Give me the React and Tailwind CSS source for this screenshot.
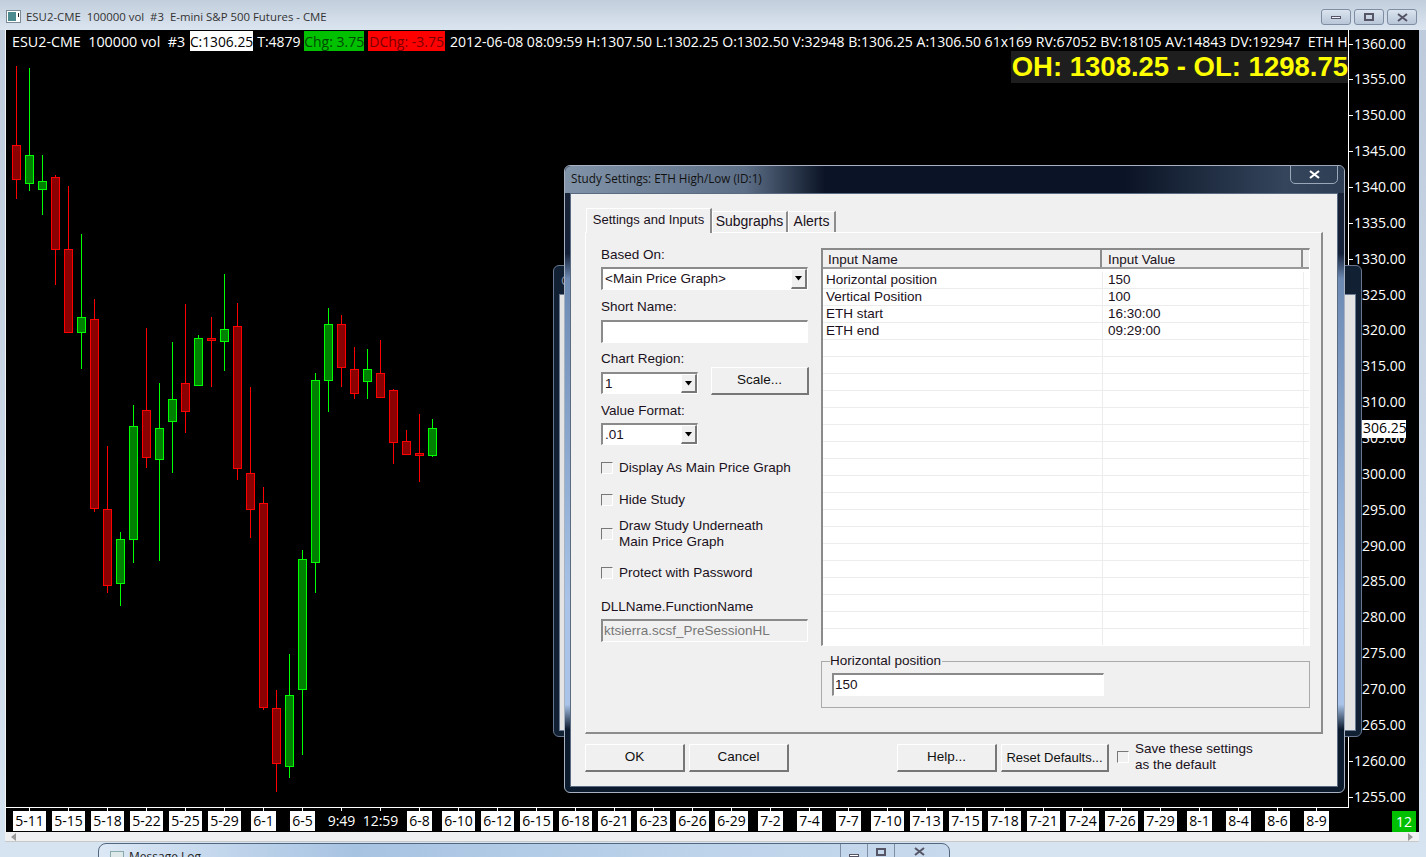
const candles = [
    // [high, body-top, body-bottom, low, up?]
    [66, 145, 179, 199, 0],
    [68, 155, 183, 191, 1],
    [155, 181, 189, 215, 1],
    [175, 177, 249, 285, 0],
    [186, 249, 332, 333, 0],
    [234, 317, 332, 369, 1],
    [299, 319, 508, 512, 0],
    [446, 509, 585, 593, 0],
    [532, 539, 583, 606, 1],
    [405, 426, 539, 563, 1],
    [328, 410, 457, 468, 0],
    [383, 428, 459, 561, 1],
    [342, 399, 421, 473, 1],
    [304, 383, 411, 433, 0],
    [335, 338, 385, 386, 1],
    [317, 338, 340, 387, 0],
    [274, 329, 341, 371, 1],
    [303, 326, 468, 480, 0],
    [387, 473, 509, 538, 0],
    [487, 503, 707, 710, 0],
    [690, 708, 763, 792, 0],
    [654, 695, 766, 778, 1],
    [550, 559, 689, 755, 1],
    [373, 380, 562, 593, 1],
    [308, 324, 380, 412, 1],
    [315, 324, 367, 387, 0],
    [347, 369, 393, 399, 0],
    [349, 369, 381, 399, 1],
    [340, 373, 397, 397, 0],
    [389, 390, 442, 464, 0],
    [430, 441, 454, 455, 0],
    [414, 453, 455, 482, 0],
    [419, 428, 455, 457, 1],
];

const prices = ['1360.00', '1355.00', '1350.00', '1345.00', '1340.00', '1335.00', '1330.00', '1325.00', '1320.00', '1315.00', '1310.00', '1305.00', '1300.00', '1295.00', '1290.00', '1285.00', '1280.00', '1275.00', '1270.00', '1265.00', '1260.00', '1255.00'];

const dates = ['5-11', '5-15', '5-18', '5-22', '5-25', '5-29', '6-1', '6-5', '9:49', '12:59', '6-8', '6-10', '6-12', '6-15', '6-18', '6-21', '6-23', '6-26', '6-29', '7-2', '7-4', '7-7', '7-10', '7-13', '7-15', '7-18', '7-21', '7-24', '7-26', '7-29', '8-1', '8-4', '8-6', '8-9'];

const inputs = [
    ['Horizontal position', '150'],
    ['Vertical Position', '100'],
    ['ETH start', '16:30:00'],
    ['ETH end', '09:29:00'],
];

const sunken = 'border-t-2 border-l-2 border-t-[#8a8a8a] border-l-[#8a8a8a] border-r border-b border-r-white border-b-white';
const raised = 'border-r-2 border-b-2 border-r-[#777] border-b-[#777] border-t border-l border-t-white border-l-white bg-[#f0f0f0]';

// Price chart candles, drawn in page coordinates
const Candles = () => (
    <svg className="absolute left-0 top-0" width="1343" height="777" viewBox="6 30 1343 777" shapeRendering="crispEdges">
        {candles.map(([high, top, bottom, low, up], i) => {
            const cx = 16.5 + i * 13;
            const line = up ? '#00ff00' : '#ff0000';
            return (
                <g key={i}>
                    <line x1={cx} x2={cx} y1={high} y2={low} stroke={line} />
                    <rect x={cx - 4} y={top + 0.5} width="8" height={bottom - top} fill={up ? '#008000' : '#8b0000'} stroke={line} />
                </g>
            );
        })}
    </svg>
);

const WinButton = ({ children }) => (
    <div className="w-[30px] h-[16px] flex items-center justify-center rounded-[3px] border border-[#7f8da3] bg-gradient-to-b from-[#dbe4ef] to-[#b8c6d8]">
        {children}
    </div>
);

const Combo = ({ value, className = '' }) => (
    <div className={`${sunken} bg-white flex items-center justify-between ${className}`}>
        <span className="pl-[2px] leading-none">{value}</span>
        <span className={`${raised} w-[16px] h-full flex items-center justify-center shrink-0`}>
            <svg width="9" height="5" viewBox="0 0 9 5"><path d="M1 0h7L4.500 4.500z" fill="#000" /></svg>
        </span>
    </div>
);

const Check = ({ children }) => (
    <div className="flex items-center gap-[6px] leading-[16px]">
        <span className="w-[12px] h-[12px] shrink-0 border-t border-l border-t-[#777] border-l-[#777] border-r border-b border-r-white border-b-white bg-[#f0f0f0]" />
        <span>{children}</span>
    </div>
);

const Button = ({ children, className = '' }) => (
    <button className={`${raised} h-[28px] flex items-center justify-center text-[#111] ${className}`}>{children}</button>
);

const Tab = ({ children, active, className = '' }) => (
    <div className={`border-r-2 border-r-[#8c8c8c] border-t border-l border-t-white border-l-white flex items-center justify-center ${active ? 'h-[25px] bg-[#f0f0f0] -mb-px z-10 relative pb-[3px]' : 'h-[21px] pb-px'} ${className}`}>
        {children}
    </div>
);

// Settings dialog, floats over the chart window
const StudyDialog = () => (
    <div className="absolute left-[564px] top-[165px] w-[781px] h-[628px] rounded-[6px] border border-[#a6b2c2] flex flex-col pl-[5px] pr-[6px] pb-[5px] bg-[linear-gradient(180deg,#1a2436_0%,#142038_14%,#6d8ab3_18%,#a9c4e8_70%,#a9c4e8_86%,#0c1a2e_90%,#0c1a2e_100%)] z-20 font-['Liberation_Sans',sans-serif] text-[13.500px] text-[#1a1020]">
        <div className="absolute left-0 right-0 top-0 h-[27px] rounded-t-[6px] bg-[linear-gradient(90deg,#8193a8_0px,#5d6f87_180px,#0b1426_260px,#0b1426_560px,#34455c_720px,#2e3e55_781px)]" />
        <div className="h-[27px] shrink-0 flex items-center relative">
            <span className="text-[11.700px] text-[#111] font-['Open_Sans',sans-serif] pl-px pb-px">Study Settings: ETH High/Low (ID:1)</span>
            <div className="absolute right-0 top-[-1px] w-[48px] h-[19px] rounded-b-[5px] border border-[#9aa7b8] flex items-center justify-center">
                <svg width="11" height="9" viewBox="0 0 11 9"><path d="M1 1l9 7M10 1L1 8" stroke="#fff" strokeWidth="2.200" fill="none" /></svg>
            </div>
        </div>
        <div className="flex-1 bg-[#f0f0f0] border border-[#5a6a80] pl-[14px] flex flex-col">
            <div className="flex items-end pl-px h-[38px] shrink-0">
                <Tab active className="w-[126px] text-[13px]">Settings and Inputs</Tab>
                <Tab className="w-[76px] text-[14px]">Subgraphs</Tab>
                <Tab className="w-[48px] text-[14px]">Alerts</Tab>
            </div>
            <div className="h-[502px] w-[738px] shrink-0 border-t border-l border-t-white border-l-white border-r-2 border-b-2 border-r-[#8c8c8c] border-b-[#8c8c8c] flex pl-[15px] pt-[14px]">
                <div className="w-[208px] shrink-0 flex flex-col">
                    <label className="leading-[16px]">Based On:</label>
                    <Combo value="<Main Price Graph>" className="mt-[4px] h-[23px] w-[207px]" />
                    <label className="mt-[9px] leading-[16px]">Short Name:</label>
                    <div className={`${sunken} mt-[5px] h-[23px] w-[207px] bg-white`} />
                    <label className="mt-[8px] leading-[16px]">Chart Region:</label>
                    <div className="flex items-start justify-between">
                        <Combo value="1" className="mt-[5px] h-[22px] w-[97px]" />
                        <Button className="w-[98px]">Scale...</Button>
                    </div>
                    <label className="mt-[8px] leading-[16px]">Value Format:</label>
                    <Combo value=".01" className="mt-[4px] h-[22px] w-[97px]" />
                    <div className="mt-[15px]"><Check>Display As Main Price Graph</Check></div>
                    <div className="mt-[16px]"><Check>Hide Study</Check></div>
                    <div className="mt-[10px]"><Check>Draw Study Underneath<br />Main Price Graph</Check></div>
                    <div className="mt-[15px]"><Check>Protect with Password</Check></div>
                    <label className="mt-[18px] leading-[16px]">DLLName.FunctionName</label>
                    <div className={`${sunken} mt-[4px] h-[23px] w-[207px] flex items-center pl-px text-[#777]`}>ktsierra.scsf_PreSessionHL</div>
                </div>
                <div className="ml-[12px] mt-[1px] flex flex-col">
                    <div className={`${sunken} h-[398px] w-[489px] bg-white flex flex-col overflow-hidden`}>
                        <div className="h-[19px] shrink-0 flex bg-[#f0f0f0] border-b-2 border-b-[#9a9a9a]">
                            <div className="w-[279px] pl-[5px] border-r-2 border-r-[#8c8c8c] leading-[20px]">Input Name</div>
                            <div className="w-[201px] pl-[6px] border-r-2 border-r-[#8c8c8c] leading-[20px]">Input Value</div>
                        </div>
                        <div className="pt-[3px]">
                            {Array.from({ length: 22 }).map((_, i) => (
                                <div key={i} className="h-[17px] flex border-b border-b-[#ececec] leading-[16px]">
                                    <div className="w-[280px] pl-[3px] border-r border-r-[#ececec]">{inputs[i]?.[0]}</div>
                                    <div className="w-[201px] pl-[5px] border-r border-r-[#ececec]">{inputs[i]?.[1]}</div>
                                </div>
                            ))}
                        </div>
                    </div>
                    <fieldset className="mt-[15px] h-[47px] w-[489px] border border-[#aaa] relative">
                        <span className="absolute left-[8px] top-[-9px] bg-[#f0f0f0] pr-px leading-[16px]">Horizontal position</span>
                        <div className={`${sunken} absolute left-[10px] top-[11px] w-[272px] h-[23px] bg-white flex items-center pl-[1px]`}>150</div>
                    </fieldset>
                </div>
            </div>
            <div className="flex mt-[10px] items-start">
                <Button className="w-[100px]">OK</Button>
                <Button className="w-[100px] ml-[4px]">Cancel</Button>
                <Button className="w-[100px] ml-[108px]">Help...</Button>
                <Button className="w-[108px] ml-[4px] text-[13px]">Reset Defaults...</Button>
                <div className="ml-[8px] -mt-[3px]"><Check>Save these settings<br />as the default</Check></div>
            </div>
        </div>
    </div>
);

export default function App() {
    return (
        <div className="relative w-[1426px] h-[857px] overflow-hidden flex flex-col bg-[linear-gradient(180deg,#bccadb_0%,#d6e3f1_100%)] font-['Open_Sans',sans-serif]">
            {/* Title bar */}
            <div className="h-[30px] shrink-0 flex items-center pt-[4px] pl-[6px] pr-[9px] bg-[linear-gradient(180deg,#c2cedc_0%,#dbe5f0_100%)]">
                <svg width="15" height="14" viewBox="0 0 15 14" className="shrink-0">
                    <rect x="0.500" y="0.500" width="14" height="12" fill="#fff" stroke="#7a8a96" />
                    <rect x="2" y="2" width="8" height="9" fill="#4b8a8e" />
                    <rect x="12" y="3" width="1" height="4" fill="#222" />
                </svg>
                <span className="ml-[5px] text-[11.400px] text-[#333] whitespace-pre">ESU2-CME  100000 vol  #3  E-mini S&amp;P 500 Futures - CME</span>
                <div className="ml-auto flex gap-[3px]">
                    <WinButton><span className="w-[10px] h-[3px] bg-[#eef] border border-[#556]" /></WinButton>
                    <WinButton><span className="w-[10px] h-[8px] border-2 border-[#556] bg-transparent" /></WinButton>
                    <WinButton>
                        <svg width="11" height="9" viewBox="0 0 11 9"><path d="M1 1l9 7M10 1L1 8" stroke="#556" strokeWidth="2" fill="none" /></svg>
                    </WinButton>
                </div>
            </div>

            {/* Chart client area */}
            <div className="ml-[5px] mr-[7px] h-[802px] shrink-0 border-l border-l-[#f4f4f4] bg-black flex flex-col text-white font-['Open_Sans',sans-serif] text-[14px]">
                <div className="h-[778px] shrink-0 flex">
                    <div className="w-[1343px] shrink-0 border-r border-b border-r-white border-b-white relative overflow-hidden">
                        <Candles />
                        <div className="relative flex items-start h-[21px] pt-px pl-[6px] whitespace-pre leading-[22px]">
                            <span className="text-[14.300px]">ESU2-CME  100000 vol  #3 </span>
                            <span className="bg-white text-black h-[20px] ml-[1px] text-[13.800px]">C:1306.25</span>
                            <span className="ml-[4px]">T:4879 </span>
                            <span className="bg-[#00c000] text-[#004a00] h-[20px]">Chg: 3.75</span>
                            <span className="bg-[#ff0000] text-[#7a0000] h-[20px] ml-[4px] px-px">DChg: -3.75</span>
                            <span className="ml-[5px] text-[14.050px]">2012-06-08 08:09:59 H:1307.50 L:1302.25 O:1302.50 V:32948 B:1306.25 A:1306.50 61x169 RV:67052 BV:18105 AV:14843 DV:192947  ETH H</span>
                        </div>
                        <div className="relative flex justify-end">
                            <span className="bg-[#1e1e1e] text-[#ffff00] font-['Liberation_Sans',sans-serif] font-bold text-[27.500px] leading-[32px] pl-px">OH: 1308.25 - OL: 1298.75</span>
                        </div>
                    </div>
                    {/* Price scale */}
                    <div className="flex-1 flex flex-col pt-[4.600px] relative">
                        {prices.map((p) => (
                            <div key={p} className="h-[35.860px] shrink-0 flex items-start">
                                <span className="w-[4px] h-px bg-white mt-[9px] shrink-0" />
                                <span className="ml-[1px] leading-[18px]">{p}</span>
                            </div>
                        ))}
                        <span className="absolute left-[6px] top-[390px] w-[51px] h-[18px] overflow-hidden bg-white text-black leading-[16px]">1306.25</span>
                    </div>
                </div>
                {/* Date scale */}
                <div className="flex-1 flex">
                    <div className="flex pl-[4px]">
                        {dates.map((d) => (
                            <div key={d} className="w-[39px] shrink-0 flex flex-col items-center">
                                <span className="w-px h-[3px] bg-white" />
                                <span className={`px-[2px] h-[20px] leading-[20px] ${d.includes(':') ? '' : 'bg-white text-black'}`}>{d}</span>
                            </div>
                        ))}
                    </div>
                    <div className="ml-auto mr-[3px] mt-[3px] w-[24px] h-[21px] bg-[#00c000] text-white text-center leading-[21px]">12</div>
                </div>
            </div>

            {/* Horizontal scrollbar */}
            <div className="ml-[5px] mr-[7px] h-[10px] shrink-0 bg-[#eef0f2] flex items-center justify-between px-[6px] border-b border-b-[#c8c8c8]">
                <span className="w-0 h-0 border-y-[4px] border-y-transparent border-r-[5px] border-r-[#999]" />
                <span className="w-0 h-0 border-y-[4px] border-y-transparent border-l-[5px] border-l-[#999]" />
            </div>

            {/* Back dialog, mostly hidden by the settings dialog */}
            <div className="absolute left-[553px] top-[265px] w-[809px] h-[472px] z-10 rounded-[6px] border border-[#66778f] bg-[#122033] px-[5px] pb-[5px] pt-[28px]">
                <div className="absolute left-[7px] top-[6px] text-[12px] text-[#8a96a5]">C</div>
                <div className="w-full h-full bg-[#e4e4e4] border border-[#6c7c92]" />
            </div>

            <StudyDialog />

            {/* Message log window along the bottom */}
            <div className="absolute left-[98px] top-[843px] w-[852px] h-[30px] z-10 rounded-t-[8px] border border-[#53667f] bg-[linear-gradient(90deg,#dce8f5_0%,#a7c3e2_30%,#bdd3ea_70%,#c7d9ec_100%)] flex items-start pl-[11px] pt-[5px]">
                <span className="w-[14px] h-[12px] mt-[2px] bg-[#dfe8e8] border border-[#8aa] shrink-0" />
                <span className="ml-[5px] text-[12px] leading-[16px] text-[#222]">Message Log</span>
                <div className="ml-auto mr-[5px] flex -mt-[5px] h-[15px] items-center">
                    <div className="w-[27px] h-full border-l border-l-[#7d8ea5] flex items-end justify-center pb-[2px]"><span className="w-[10px] h-[3px] border border-[#556] bg-white" /></div>
                    <div className="w-[27px] h-full border-l border-l-[#7d8ea5] flex items-center justify-center"><span className="w-[10px] h-[8px] border-2 border-[#556]" /></div>
                    <div className="w-[50px] h-full border-l border-l-[#7d8ea5] flex items-center justify-center">
                        <svg width="11" height="9" viewBox="0 0 11 9"><path d="M1 1l9 7M10 1L1 8" stroke="#556" strokeWidth="2" fill="none" /></svg>
                    </div>
                </div>
            </div>
        </div>
    );
}
